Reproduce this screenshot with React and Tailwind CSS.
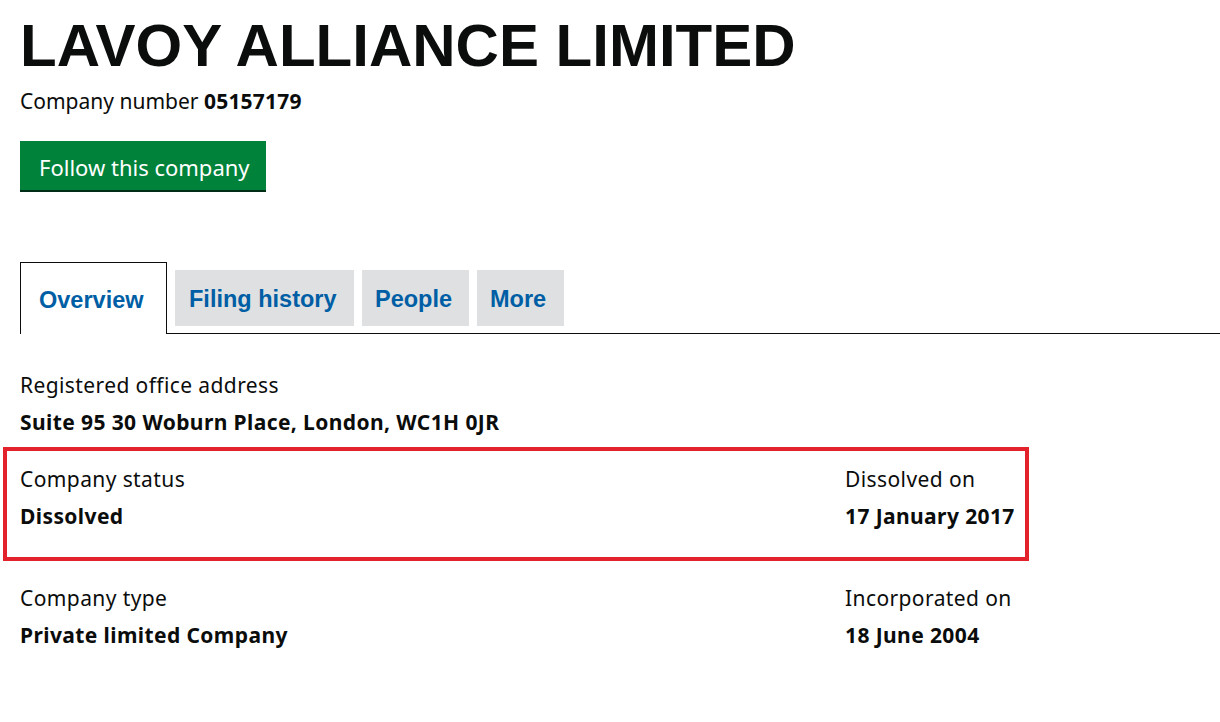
const body = { fontFamily: '"Noto Sans", sans-serif' };
const arial = { fontFamily: '"Liberation Sans", Arial, sans-serif' };

function Field({ label, value, className = '' }) {
  return (
    <div className={className}>
      <div className="text-[21px] leading-[25px] tracking-[0.4px] text-[#0b0c0c]">{label}</div>
      <div className="mt-[12px] text-[21px] leading-[25px] tracking-[0.4px] font-bold text-[#0b0c0c]">{value}</div>
    </div>
  );
}

export default function App() {
  return (
    <div className="min-h-[722px] bg-white pt-[16px] pl-[20px] overflow-hidden" style={body}>
      <h1 className="text-[60px] leading-[60px] font-bold text-[#0b0c0c] whitespace-nowrap" style={arial}>
        LAVOY ALLIANCE LIMITED
      </h1>
      <p className="mt-[13px] text-[21px] leading-[25px] text-[#0b0c0c]">
        Company number <strong className="font-bold tracking-[0.2px]">05157179</strong>
      </p>
      <button className="mt-[27px] w-[246px] h-[49px] bg-[#00823b] text-white text-[22px] leading-[25px] shadow-[0_2px_0_#002d18] text-left pl-[19px] pt-[4px]">
        Follow this company
      </button>

      <nav className="mt-[72px] flex items-end gap-[8px] border-b border-[#0b0c0c]" style={arial}>
        <div className="w-[147px] h-[72px] -mb-px border border-b-0 border-[#0b0c0c] bg-white flex items-center pl-[18px] pt-[4px]">
          <span className="text-[23.5px] font-bold text-[#005ea5]">Overview</span>
        </div>
        <div className="w-[179px] h-[56px] mb-[7px] bg-[#dee0e2] flex items-center pl-[14px] pt-[3px]">
          <span className="text-[23.5px] font-bold text-[#005ea5]">Filing history</span>
        </div>
        <div className="w-[107px] h-[56px] mb-[7px] bg-[#dee0e2] flex items-center pl-[13px] pt-[3px]">
          <span className="text-[23.5px] font-bold text-[#005ea5]">People</span>
        </div>
        <div className="w-[87px] h-[56px] mb-[7px] bg-[#dee0e2] flex items-center pl-[13px] pt-[3px]">
          <span className="text-[23.5px] font-bold text-[#005ea5]">More</span>
        </div>
      </nav>

      <Field className="mt-[39px]" label="Registered office address" value="Suite 95 30 Woburn Place, London, WC1H 0JR" />

      <div className="relative mt-[32px] flex">
        <Field className="w-[825px]" label="Company status" value="Dissolved" />
        <Field label="Dissolved on" value="17 January 2017" />
        <div className="absolute left-[-17px] top-[-20px] w-[1026px] h-[114px] border-[4px] border-[#e3232b] pointer-events-none" />
      </div>

      <div className="mt-[57px] flex">
        <Field className="w-[825px]" label="Company type" value="Private limited Company" />
        <Field label="Incorporated on" value="18 June 2004" />
      </div>
    </div>
  );
}
